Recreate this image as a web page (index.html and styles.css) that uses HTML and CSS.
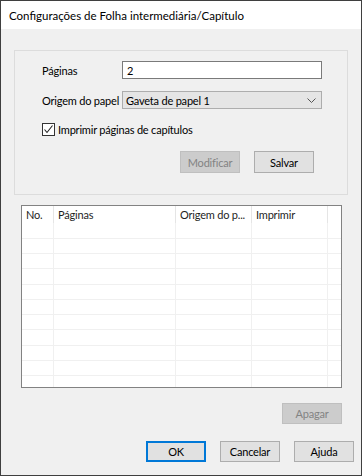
FILE: index.html
```html
<!DOCTYPE html>
<html lang="pt">
<head>
<meta charset="utf-8">
<title>Configurações de Folha intermediária/Capítulo</title>
<link rel="stylesheet" href="styles.css">
</head>
<body>
<div class="window">
  <div class="titlebar">Configurações de Folha intermediária/Capítulo</div>
  <div class="client">
    <div class="group">
      <div class="field-row">
        <span class="label">Páginas</span>
        <div class="input">2</div>
      </div>
      <div class="field-row select-row">
        <span class="label">Origem do papel</span>
        <div class="select">
          <span>Gaveta de papel 1</span>
          <svg class="chev" width="9" height="5" viewBox="0 0 9 5"><path d="M0.5 0.5 L4.5 4.5 L8.5 0.5" fill="none" stroke="#555" stroke-width="1"/></svg>
        </div>
      </div>
      <div class="check-row">
        <span class="checkbox"><svg width="11" height="11" viewBox="0 0 11 11"><path d="M1.5 5.5 L4 8.5 L9.5 1.5" fill="none" stroke="#222" stroke-width="1.1"/></svg></span>
        <span class="check-label">Imprimir páginas de capítulos</span>
      </div>
      <div class="group-buttons">
        <div class="btn disabled">Modificar</div>
        <div class="btn">Salvar</div>
      </div>
    </div>

    <div class="list">
      <div class="lrow header">
        <div class="cell">No.</div>
        <div class="cell">Páginas</div>
        <div class="cell">Origem do p...</div>
        <div class="cell">Imprimir</div>
        <div class="cell"></div>
      </div>
      <div class="rows">
        <div class="lrow"><div class="cell"></div><div class="cell"></div><div class="cell"></div><div class="cell"></div><div class="cell"></div></div>
        <div class="lrow"><div class="cell"></div><div class="cell"></div><div class="cell"></div><div class="cell"></div><div class="cell"></div></div>
        <div class="lrow"><div class="cell"></div><div class="cell"></div><div class="cell"></div><div class="cell"></div><div class="cell"></div></div>
        <div class="lrow"><div class="cell"></div><div class="cell"></div><div class="cell"></div><div class="cell"></div><div class="cell"></div></div>
        <div class="lrow"><div class="cell"></div><div class="cell"></div><div class="cell"></div><div class="cell"></div><div class="cell"></div></div>
        <div class="lrow"><div class="cell"></div><div class="cell"></div><div class="cell"></div><div class="cell"></div><div class="cell"></div></div>
        <div class="lrow"><div class="cell"></div><div class="cell"></div><div class="cell"></div><div class="cell"></div><div class="cell"></div></div>
        <div class="lrow"><div class="cell"></div><div class="cell"></div><div class="cell"></div><div class="cell"></div><div class="cell"></div></div>
        <div class="lrow"><div class="cell"></div><div class="cell"></div><div class="cell"></div><div class="cell"></div><div class="cell"></div></div>
        <div class="lrow"><div class="cell"></div><div class="cell"></div><div class="cell"></div><div class="cell"></div><div class="cell"></div></div>
      </div>
      <div class="lrow filler"><div class="cell"></div><div class="cell"></div><div class="cell"></div><div class="cell"></div><div class="cell"></div></div>
    </div>

    <div class="apagar-row">
      <div class="btn disabled">Apagar</div>
    </div>

    <div class="dialog-buttons">
      <div class="btn default">OK</div>
      <div class="btn">Cancelar</div>
      <div class="btn">Ajuda</div>
    </div>
  </div>
</div>
</body>
</html>
```

FILE: styles.css
```css
* { box-sizing: border-box; }
html, body { margin: 0; padding: 0; }
body {
  font-family: Lato, "Noto Sans", sans-serif;
  font-size: 11px;
  color: #000;
  background: #fff;
}
.window {
  width: 362px;
  height: 476px;
  border: 1px solid #3f3f3f;
  display: flex;
  flex-direction: column;
}
.titlebar {
  height: 28px;
  background: #fff;
  padding-left: 8px;
  display: flex;
  align-items: center;
  padding-top: 1px;
  white-space: nowrap;
  font-size: 11.5px;
}
.client {
  flex: 1;
  background: #f0f0f0;
  display: flex;
  flex-direction: column;
  letter-spacing: -0.2px;
}
.group {
  margin: 21px 0 0 13px;
  width: 334px;
  height: 145px;
  border: 1px solid #dcdcdc;
  padding: 10px 0 0 27px;
}
.field-row {
  display: flex;
  align-items: center;
  height: 18px;
}
.select-row { margin-top: 12px; }
.label { width: 80px; white-space: nowrap; }
.input {
  width: 200px;
  height: 18px;
  border: 1px solid #7a7a7a;
  background: #fff;
  padding-left: 4px;
  display: flex;
  align-items: center;
}
.select {
  width: 200px;
  height: 18px;
  border: 1px solid #adadad;
  background: #e5e5e5;
  padding: 0 5px 0 3px;
  display: flex;
  align-items: center;
  justify-content: space-between;
}
.chev { margin-top: 1px; }
.check-row {
  margin-top: 14px;
  display: flex;
  align-items: center;
  height: 13px;
}
.checkbox {
  width: 13px;
  height: 13px;
  border: 1px solid #333;
  background: #fff;
  display: flex;
  align-items: center;
  justify-content: center;
}
.check-label { margin-left: 3px; white-space: nowrap; }
.group-buttons {
  margin-top: 15px;
  display: flex;
  gap: 14px;
  padding-left: 138px;
}
.btn {
  width: 60px;
  height: 22px;
  border: 1px solid #adadad;
  background: #e1e1e1;
  display: flex;
  align-items: center;
  justify-content: center;
  white-space: nowrap;
}
.btn.disabled {
  background: #cccccc;
  border-color: #bfbfbf;
  color: #838383;
}
.btn.default {
  border: 1px solid #0078d7;
  box-shadow: inset 0 0 0 1px #0078d7;
}
.list {
  margin: 10px 0 0 20px;
  width: 321px;
  height: 183px;
  border: 1px solid #828282;
  background: #fff;
  display: flex;
  flex-direction: column;
}
.lrow {
  display: grid;
  grid-template-columns: 32px 122px 76px 76px 1fr;
  height: 15px;
}
.lrow .cell {
  border-right: 1px solid #f0f0f0;
  border-bottom: 1px solid #f0f0f0;
  padding-left: 4px;
  white-space: nowrap;
  overflow: hidden;
}
.lrow .cell:last-child { border-right: none; }
.rows .lrow:nth-child(4n) { height: 16px; }
.rows .lrow:first-child { height: 16px; }
.lrow.header {
  height: 17px;
  color: #1e1e1e;
}
.lrow.header .cell {
  border-bottom: none;
  border-right-color: #e5e5e5;
  line-height: 17px;
}
.lrow.filler { flex: 1; }
.lrow.filler .cell { border-bottom: none; }
.apagar-row {
  margin-top: 15px;
  display: flex;
  justify-content: flex-end;
  padding-right: 19px;
}
.apagar-row .btn { height: 21px; }
.dialog-buttons {
  margin-top: 17px;
  display: flex;
  justify-content: flex-end;
  gap: 14px;
  padding-right: 7px;
}
.dialog-buttons .btn { height: 21px; }
```
